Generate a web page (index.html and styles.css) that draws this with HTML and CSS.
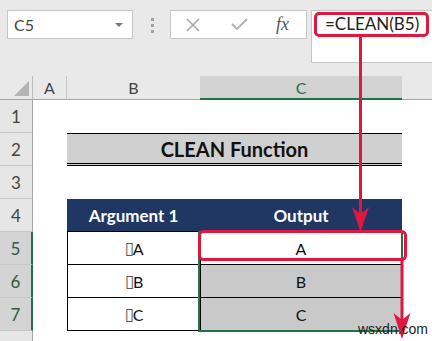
FILE: index.html
```html
<!DOCTYPE html>
<html lang="en">
<head>
    <meta charset="UTF-8">
    <meta name="viewport" content="width=device-width, initial-scale=1.0">
    <title>CLEAN Function</title>
    <link rel="stylesheet" href="styles.css">
</head>
<body>

<div id="formula-bar">
    <div class="name-box"><span>C5</span><span class="caret"></span></div>
    <div class="grip"><span></span><span></span><span></span></div>
    <div class="fx-buttons">
        <svg class="btn-cancel" width="14" height="14" viewBox="0 0 14 14"><path d="M1 1 L13 13 M13 1 L1 13" stroke="#a8a8a8" stroke-width="1.6" fill="none"/></svg>
        <svg class="btn-enter" width="17" height="13" viewBox="0 0 17 13"><path d="M1 6 L6 11 L16 1" stroke="#b0b0b0" stroke-width="1.8" fill="none"/></svg>
        <span class="fx-label">fx</span>
    </div>
    <div class="formula-input"><span class="formula-text">=CLEAN(B5)</span></div>
</div>

<div id="sheet">
    <div class="row col-heads">
        <div class="corner"><span class="corner-tri"></span></div>
        <div class="ch col-a">A</div>
        <div class="ch col-b">B</div>
        <div class="ch col-c sel">C</div>
        <div class="ch col-rest"></div>
    </div>
    <div class="row">
        <div class="rh">1</div>
        <div class="cell col-a"></div><div class="cell col-b"></div><div class="cell col-c"></div><div class="cell col-rest"></div>
    </div>
    <div class="row">
        <div class="rh">2</div>
        <div class="cell col-a"></div>
        <div class="cell title">CLEAN Function</div>
        <div class="cell col-rest"></div>
    </div>
    <div class="row">
        <div class="rh">3</div>
        <div class="cell col-a"></div><div class="cell col-b"></div><div class="cell col-c"></div><div class="cell col-rest"></div>
    </div>
    <div class="row">
        <div class="rh">4</div>
        <div class="cell col-a"></div>
        <div class="cell col-b head">Argument 1</div>
        <div class="cell col-c head">Output</div>
        <div class="cell col-rest"></div>
    </div>
    <div class="row">
        <div class="rh sel">5</div>
        <div class="cell col-a"></div>
        <div class="cell col-b data"><span class="ctrl">▯</span>A</div>
        <div class="cell col-c data active">A</div>
        <div class="cell col-rest"></div>
    </div>
    <div class="row">
        <div class="rh sel">6</div>
        <div class="cell col-a"></div>
        <div class="cell col-b data"><span class="ctrl">▯</span>B</div>
        <div class="cell col-c data picked">B</div>
        <div class="cell col-rest"></div>
    </div>
    <div class="row">
        <div class="rh sel">7</div>
        <div class="cell col-a"></div>
        <div class="cell col-b data"><span class="ctrl">▯</span>C</div>
        <div class="cell col-c data picked">C</div>
        <div class="cell col-rest"></div>
    </div>
    <div class="row">
        <div class="rh"></div>
        <div class="cell col-a"></div><div class="cell col-b"></div><div class="cell col-c"></div><div class="cell col-rest"></div>
    </div>
    <div class="selection"></div>
</div>

<!-- callout arrows drawn over the sheet -->
<svg class="callouts" width="432" height="341" viewBox="0 0 432 341">
    <line x1="360.5" y1="36" x2="360.5" y2="214" stroke="#e0173f" stroke-width="3"/>
    <path d="M352 207 L360.5 214 L369 207 L360.5 232 Z" fill="#e0173f"/>
    <rect x="199.5" y="231.5" width="206" height="28" rx="4" fill="none" stroke="#e0173f" stroke-width="3"/>
    <line x1="402" y1="260" x2="402" y2="322" stroke="#e0173f" stroke-width="3"/>
    <path d="M393.5 313 L402 320 L410.5 313 L402 339 Z" fill="#e0173f"/>
</svg>
<div class="watermark">wsxdn.com</div>

</body>
</html>
```

FILE: styles.css
```css
body {
    margin: 0;
    width: 432px;
    height: 341px;
    overflow: hidden;
    position: relative;
    font-family: 'Lato', 'Open Sans', sans-serif;
    background: #fff;
    color: #222;
}
#formula-bar {
    display: flex;
    align-items: flex-start;
    height: 76px;
    box-sizing: border-box;
    padding: 10px 0 0 7px;
    background: #e9e9e9;
}
.name-box {
    width: 126px;
    height: 29px;
    box-sizing: border-box;
    background: #fff;
    border: 1px solid #c6c6c6;
    display: flex;
    align-items: center;
    justify-content: space-between;
    padding: 0 9px 0 6px;
    font-size: 16px;
    color: #444;
}
.caret {
    border-left: 4px solid transparent;
    border-right: 4px solid transparent;
    border-top: 4px solid #777;
}
.grip {
    width: 3px;
    margin: 8px 16px 0 18px;
    display: flex;
    flex-direction: column;
    gap: 3px;
}
.grip span {
    height: 3px;
    background: #a0a0a0;
}
.fx-buttons {
    width: 137px;
    height: 29px;
    box-sizing: border-box;
    background: #fff;
    border: 1px solid #c6c6c6;
    display: flex;
    align-items: center;
    padding-left: 15px;
}
.btn-enter {
    margin-left: 31px;
}
.fx-label {
    margin-left: 28px;
    font-family: 'Liberation Serif', serif;
    font-style: italic;
    font-size: 18px;
    color: #555;
}
.formula-input {
    flex: 1;
    margin-left: 4px;
    height: 53px;
    box-sizing: border-box;
    background: #fff;
    border: 1px solid #c6c6c6;
    border-right: none;
    padding: 1px 0 0 2px;
}
.formula-text {
    display: inline-block;
    height: 25px;
    box-sizing: border-box;
    border: 3px solid #e0173f;
    border-radius: 5px;
    padding: 0 7px 0 8px;
    line-height: 18px;
    font-size: 17px;
    color: #222;
}

#sheet {
    position: relative;
}
.row {
    display: flex;
    height: 33px;
}
.row.col-heads {
    height: 24px;
    background: #e9e9e9;
}
.corner {
    width: 33px;
    box-sizing: border-box;
    border-right: 1px solid #bdbdbd;
    border-bottom: 1px solid #a6a6a6;
    display: flex;
    align-items: flex-end;
    justify-content: flex-end;
    padding: 0 3px 3px 0;
}
.corner-tri {
    width: 0;
    height: 0;
    border-left: 15px solid transparent;
    border-bottom: 15px solid #b4b4b4;
}
.ch {
    box-sizing: border-box;
    border-bottom: 1px solid #a6a6a6;
    display: flex;
    align-items: center;
    justify-content: center;
    font-size: 16px;
    color: #444;
}
.ch.col-a {
    border-right: 1px solid #c8c8c8;
}
.ch.sel {
    background: #d2d2d2;
    color: #217346;
    border-bottom: 2px solid #217346;
}
.rh {
    width: 33px;
    box-sizing: border-box;
    border-right: 1px solid #a6a6a6;
    border-bottom: 1px solid #c8c8c8;
    background: #e6e6e6;
    display: flex;
    align-items: center;
    justify-content: center;
    font-size: 17px;
    color: #444;
}
.rh.sel {
    background: #d4d4d4;
    color: #2d5b41;
    border-right: 2px solid #217346;
}
.cell {
    box-sizing: border-box;
    display: flex;
    align-items: center;
    justify-content: center;
}
.col-a {
    width: 34px;
}
.col-b {
    width: 133px;
}
.col-c {
    width: 202px;
}
.col-rest {
    flex: 1;
}
.title {
    width: 335px;
    background: #d0d0d0;
    border-top: 1px solid #000;
    border-bottom: 3px double #000;
    font-weight: bold;
    font-size: 20px;
    color: #111;
}
.head {
    background: #203764;
    color: #fff;
    font-weight: bold;
    font-size: 17px;
    border-bottom: 1px solid #000;
}
.data {
    font-size: 16px;
    color: #111;
    border-bottom: 1px solid #000;
}
.col-b.data {
    border-left: 1px solid #000;
}
.col-c.data {
    border-left: 1px solid #000;
    border-right: 1px solid #000;
}
.data.picked {
    background: #c9c9c9;
}
.ctrl {
    font-family: 'DejaVu Sans', sans-serif;
    font-size: 17px;
    line-height: 1;
    color: #555;
    letter-spacing: -1px;
}
.selection {
    position: absolute;
    left: 198px;
    top: 155px;
    width: 205px;
    height: 101px;
    box-sizing: border-box;
    border: 2px solid #217346;
}
.callouts {
    position: absolute;
    left: 0;
    top: 0;
    pointer-events: none;
}
.watermark {
    position: absolute;
    left: 358px;
    top: 321px;
    font-family: 'Liberation Sans', sans-serif;
    font-size: 14px;
    color: #222;
}
```
